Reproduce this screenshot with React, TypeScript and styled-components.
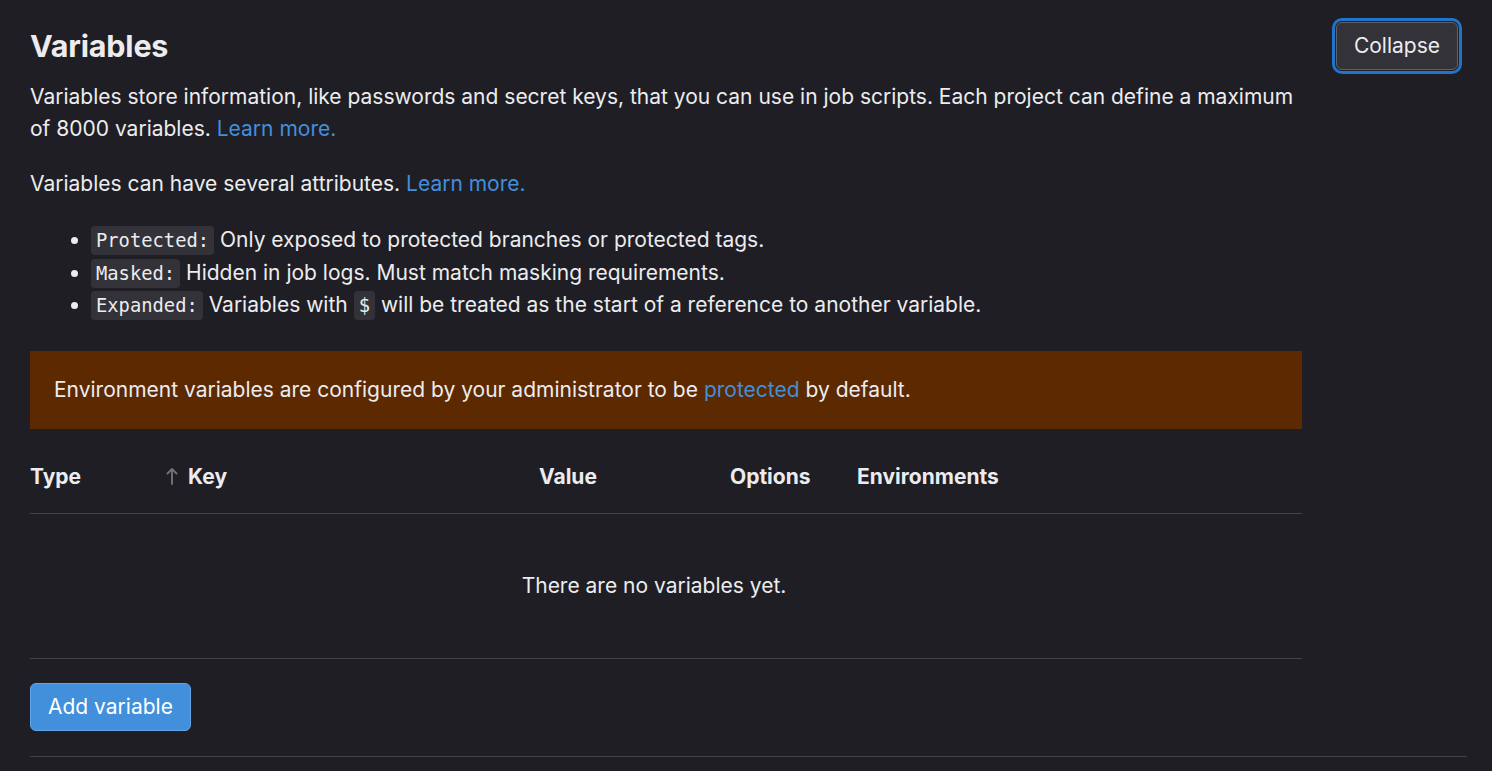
import React from 'react'
import styled, { createGlobalStyle } from 'styled-components'

const GlobalStyle = createGlobalStyle`
  html, body {
    margin: 0;
    padding: 0;
    background-color: #1f1e24;
  }
  body {
    color: #ececef;
    font-family: Inter, 'Noto Sans', sans-serif;
    font-size: 21px;
    line-height: 32px;
  }
`

const Page = styled.div`
  padding: 0 25px 0 30px;
  min-height: 771px;
  box-sizing: border-box;
`
const Section = styled.section`
  border-bottom: 1px solid #434248;
`
const Header = styled.div`
  display: flex;
  justify-content: space-between;
  align-items: flex-start;
`
const HeaderText = styled.div`
  width: 1272px;
`
const Title = styled.h4`
  margin: 0;
  padding-top: 27px;
  font-size: 30.5px;
  line-height: 38px;
  font-weight: 700;
  letter-spacing: -0.2px;
`
const Paragraph = styled.p<{ $gap?: number }>`
  margin: ${(p) => p.$gap ?? 0}px 0 0;
`
const Link = styled.a`
  color: #428fdc;
  text-decoration: none;
`
const AttrList = styled.ul`
  margin: 24px 0 0;
  padding-left: 61px;

  li {
    line-height: 31.5px;
  }
`
const Code = styled.code`
  font-family: 'DejaVu Sans Mono', 'Liberation Mono', monospace;
  font-size: 18.8px;
  background-color: #333238;
  border-radius: 4px;
  padding: 4px 5px;
`
const Button = styled.button<{ $variant?: 'default' | 'confirm' }>`
  font-family: Inter, 'Noto Sans', sans-serif;
  font-size: 21px;
  line-height: 24px;
  height: 48px;
  padding: 0 17px;
  border-radius: 6px;
  cursor: pointer;
  color: ${(p) => (p.$variant === 'confirm' ? '#ffffff' : '#ececef')};
  background-color: ${(p) => (p.$variant === 'confirm' ? '#428fdc' : '#333238')};
  border: 1px solid ${(p) => (p.$variant === 'confirm' ? '#63a6e9' : '#626168')};
`
const CollapseButton = styled(Button)`
  margin: 22px 9px 0 0;
  box-shadow: 0 0 0 1px #1f1e24, 0 0 0 4px #1f75cb;
`
const Alert = styled.div`
  margin-top: 29px;
  background-color: #5c2900;
  padding: 23px 24px;
  line-height: 32px;
  width: 1272px;
  box-sizing: border-box;
`
const Table = styled.table`
  width: 1272px;
  margin-top: 12px;
  border-collapse: collapse;
  table-layout: fixed;
`
const Th = styled.th`
  text-align: left;
  font-weight: 700;
  padding: 20px 0;
  line-height: 32px;
  border-bottom: 1px solid #434248;
  white-space: nowrap;
`
const SortArrow = styled.span`
  display: inline-flex;
  vertical-align: middle;
  margin-right: 10px;
  position: relative;
  top: -2px;
`
const EmptyCell = styled.td`
  text-align: center;
  height: 144px;
  padding: 0;
  border-bottom: 1px solid #434248;
`
const Actions = styled.div`
  padding: 24px 0 25px;
`

const ArrowUp = () => (
  <svg width="12" height="18" viewBox="0 0 12 18" fill="none">
    <path d="M6 17V2M1.5 6.5L6 2l4.5 4.5" stroke="#737278" strokeWidth="1.9" strokeLinecap="round" strokeLinejoin="round" />
  </svg>
)

const App: React.FC = () => {
  return (
    <Page>
      <GlobalStyle />
      <Section>
        <Header>
          <HeaderText>
            <Title>Variables</Title>
            <Paragraph $gap={16}>
              Variables store information, like passwords and secret keys, that you can use in job scripts. Each
              project can define a maximum of 8000 variables. <Link href="#">Learn more.</Link>
            </Paragraph>
            <Paragraph $gap={23}>
              Variables can have several attributes. <Link href="#">Learn more.</Link>
            </Paragraph>
            <AttrList>
              <li>
                <Code>Protected:</Code> Only exposed to protected branches or protected tags.
              </li>
              <li>
                <Code>Masked:</Code> Hidden in job logs. Must match masking requirements.
              </li>
              <li>
                <Code>Expanded:</Code> Variables with <Code>$</Code> will be treated as the start of a reference to
                another variable.
              </li>
            </AttrList>
          </HeaderText>
          <CollapseButton>Collapse</CollapseButton>
        </Header>
        <Alert>
          Environment variables are configured by your administrator to be <Link href="#">protected</Link> by
          default.
        </Alert>
        <Table>
          <colgroup>
            <col style={{ width: 136 }} />
            <col style={{ width: 373 }} />
            <col style={{ width: 191 }} />
            <col style={{ width: 127 }} />
            <col />
            <col style={{ width: 24 }} />
          </colgroup>
          <thead>
            <tr>
              <Th>Type</Th>
              <Th>
                <SortArrow>
                  <ArrowUp />
                </SortArrow>
                Key
              </Th>
              <Th>Value</Th>
              <Th>Options</Th>
              <Th>Environments</Th>
              <Th />
            </tr>
          </thead>
          <tbody>
            <tr>
              <EmptyCell colSpan={5}>There are no variables yet.</EmptyCell>
              <EmptyCell />
            </tr>
          </tbody>
        </Table>
        <Actions>
          <Button $variant="confirm">Add variable</Button>
        </Actions>
      </Section>
    </Page>
  )
}

export default App
